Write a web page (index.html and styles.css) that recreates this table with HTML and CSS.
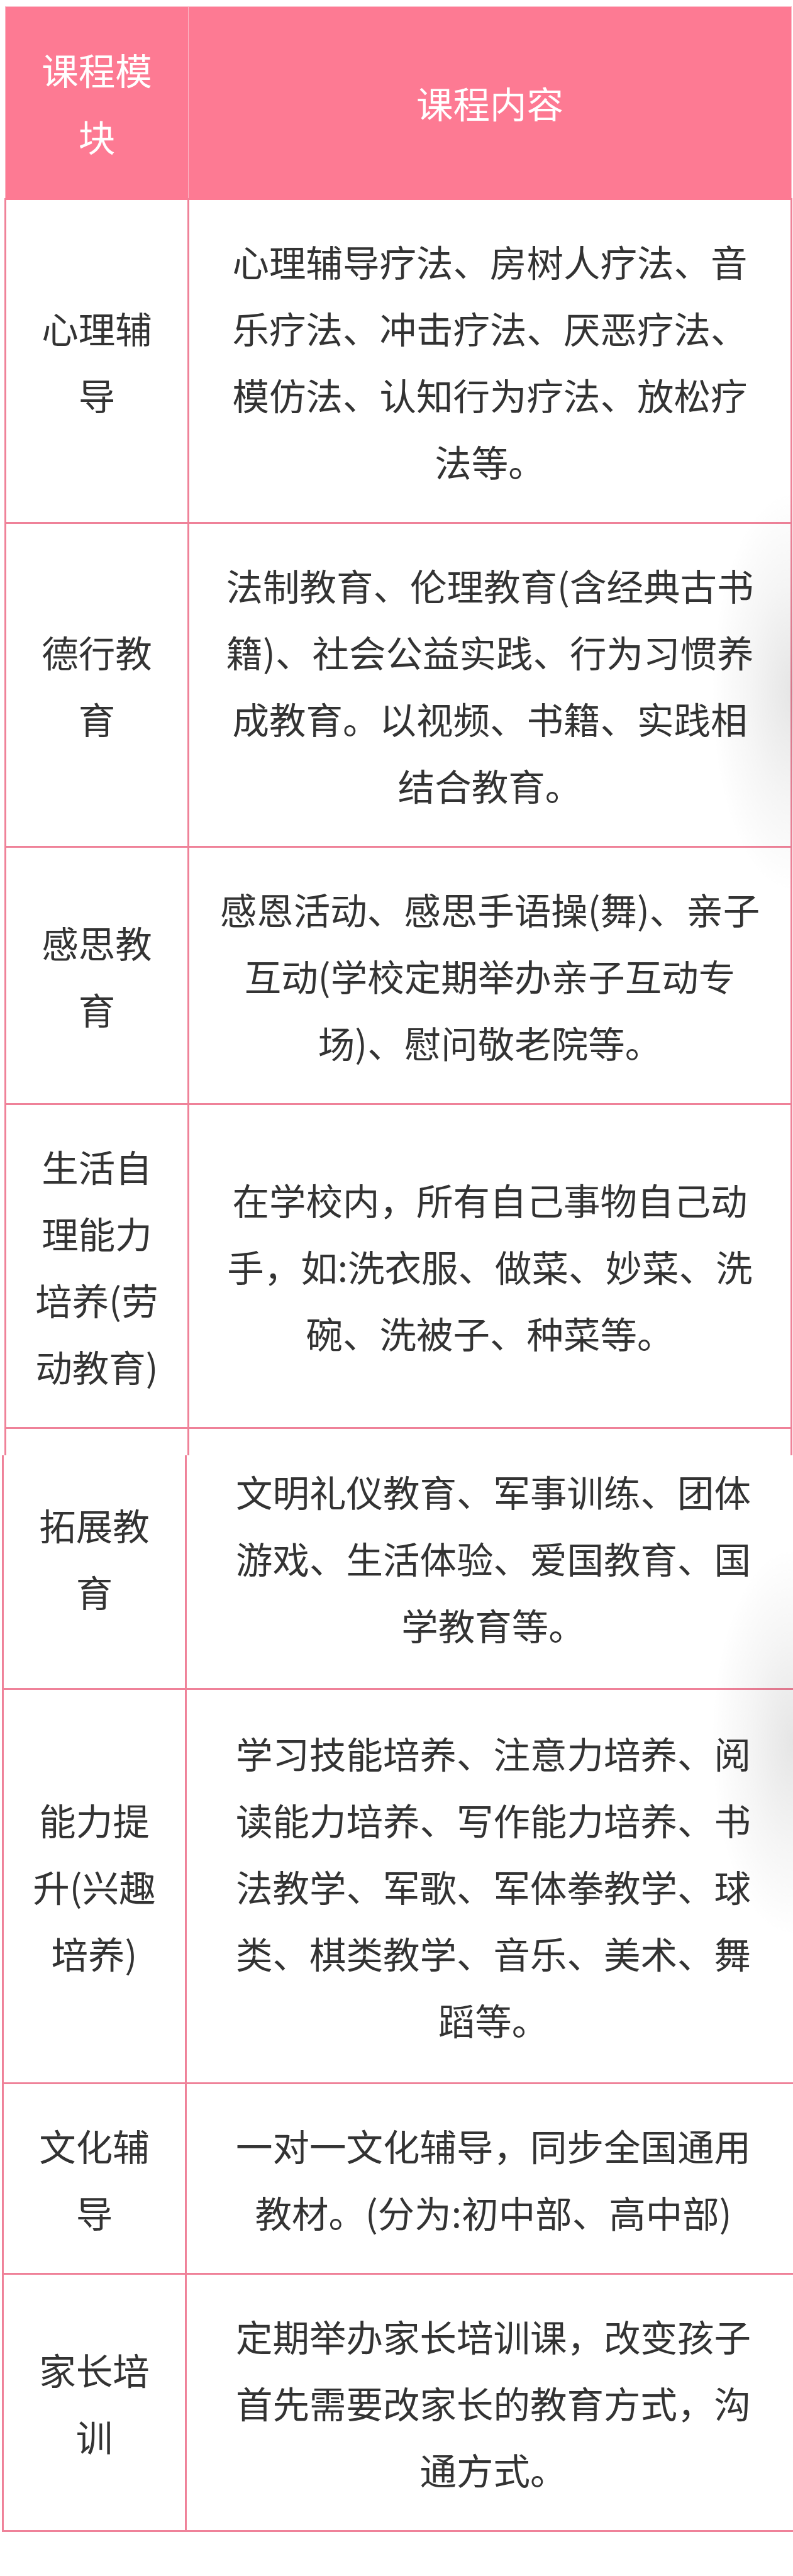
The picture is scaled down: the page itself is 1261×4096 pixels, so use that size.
FILE: index.html
```html
<!DOCTYPE html>
<html lang="zh-CN">
<head>
<meta charset="utf-8">
<title>课程模块</title>
<link rel="stylesheet" href="styles.css">
</head>
<body>
<div class="page">
  <table class="course course-top">
    <colgroup><col class="c-mod"><col class="c-body"></colgroup>
    <thead>
      <tr><th>课程模<br>块</th><th>课程内容</th></tr>
    </thead>
    <tbody>
      <tr><td class="mod">心理辅<br>导</td><td>心理辅导疗法、房树人疗法、音<br>乐疗法、冲击疗法、厌恶疗法、<br>模仿法、认知行为疗法、放松疗<br>法等。</td></tr>
      <tr><td class="mod">德行教<br>育</td><td>法制教育、伦理教育(含经典古书<br>籍)、社会公益实践、行为习惯养<br>成教育。以视频、书籍、实践相<br>结合教育。</td></tr>
      <tr><td class="mod">感思教<br>育</td><td>感恩活动、感思手语操(舞)、亲子<br>互动(学校定期举办亲子互动专<br>场)、慰问敬老院等。</td></tr>
      <tr><td class="mod">生活自<br>理能力<br>培养(劳<br>动教育)</td><td>在学校内，所有自己事物自己动<br>手，如:洗衣服、做菜、妙菜、洗<br>碗、洗被子、种菜等。</td></tr>
      <tr class="stub"><td></td><td></td></tr>
    </tbody>
  </table>
  <table class="course course-bottom">
    <colgroup><col class="c-mod"><col class="c-body-wide"></colgroup>
    <tbody>
      <tr class="cont"><td class="mod">拓展教<br>育</td><td>文明礼仪教育、军事训练、团体<br>游戏、生活体验、爱国教育、国<br>学教育等。</td></tr>
      <tr class="tall"><td class="mod">能力提<br>升(兴趣<br>培养)</td><td>学习技能培养、注意力培养、阅<br>读能力培养、写作能力培养、书<br>法教学、军歌、军体拳教学、球<br>类、棋类教学、音乐、美术、舞<br>蹈等。</td></tr>
      <tr><td class="mod">文化辅<br>导</td><td>一对一文化辅导，同步全国通用<br>教材。(分为:初中部、高中部)</td></tr>
      <tr><td class="mod">家长培<br>训</td><td>定期举办家长培训课，改变孩子<br>首先需要改家长的教育方式，沟<br>通方式。</td></tr>
    </tbody>
  </table>
  <div class="shade shade-a"></div>
  <div class="shade shade-b"></div>
</div>
</body>
</html>
```

FILE: styles.css
```css
html, body {
  margin: 0;
  padding: 0;
  background: #ffffff;
  overflow-x: hidden;
}

.page {
  position: relative;
  padding-top: 10px;
  padding-bottom: 80px;
  font-family: "Noto Sans CJK SC", "Noto Sans", sans-serif;
  font-size: 58.5px;
  line-height: 106px;
  color: #333333;
}

.course {
  border-collapse: collapse;
  table-layout: fixed;
}

.course-top {
  margin-left: 7px;
  width: 1253px;
}

.course-bottom {
  margin-left: 3px;
  width: 1272px;
}

.c-mod {
  width: 291px;
}

.course th {
  background: #fd7a93;
  color: #ffffff;
  font-weight: normal;
  text-align: center;
  vertical-align: middle;
  padding: 46px 0;
  border-top: 1px solid #fbb9c7;
  border-left: 1px solid #fbb9c7;
  border-right: 1px solid #fbb9c7;
  white-space: nowrap;
}

.course td {
  border: 3px solid #ef8299;
  text-align: center;
  vertical-align: middle;
  padding: 44px 0;
  white-space: nowrap;
}

.course thead + tbody tr:first-child td {
  border-top-color: #fd7a93;
}

.stub td {
  height: 42px;
  padding: 0;
  border-bottom: 0;
}

.cont td {
  border-top: 0;
  padding-top: 4px;
  padding-bottom: 48px;
}

.tall td {
  padding: 47px 0;
}

.shade {
  position: absolute;
  right: 0;
  width: 130px;
  pointer-events: none;
  background: radial-gradient(ellipse 100% 50% at 100% 50%, rgba(0, 0, 0, 0.10), rgba(0, 0, 0, 0.04) 55%, rgba(0, 0, 0, 0) 100%);
}

.shade-a {
  top: 780px;
  height: 640px;
}

.shade-b {
  top: 2460px;
  height: 620px;
}
```
